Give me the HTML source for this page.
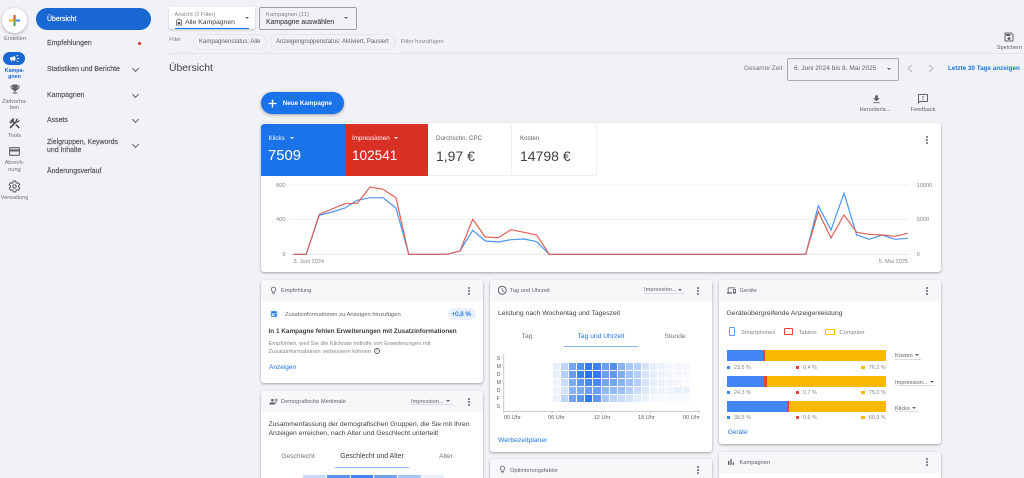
<!DOCTYPE html>
<html lang="de"><head><meta charset="utf-8"><title>Übersicht</title>
<style>
html,body{margin:0;padding:0;width:1024px;height:478px;overflow:hidden;background:#f1f2f5}
body{font-family:"Liberation Sans",sans-serif;color:#3c4043}
#w{position:relative;width:1024px;height:478px;overflow:hidden;filter:blur(.35px)}
.t{position:absolute;white-space:nowrap;line-height:10px;height:10px;font-size:6px;color:#5f6368;margin-top:1px}
.c{transform:translateX(-50%);text-align:center}
.r{transform:translateX(-100%)}
.b{position:absolute}
.card{position:absolute;background:#fff;border-radius:3px;box-shadow:0 1px 2px rgba(60,64,67,.35),0 1px 3px rgba(60,64,67,.12);overflow:hidden}
.hd{position:absolute;left:0;right:0;top:0;background:#f6f7f8}
svg.i{position:absolute;fill:#5f6368}
.nav{font-size:6.95px;color:#4d5156;-webkit-text-stroke:.15px #4d5156}
.rail{font-size:5.6px;color:#6b6f74}
.caret{position:absolute;width:0;height:0;border-left:2.5px solid transparent;border-right:2.5px solid transparent;border-top:2.5px solid #5f6368}
.dots{position:absolute;width:2px;height:2px;border-radius:50%;background:#5f6368;box-shadow:0 -3px 0 #5f6368,0 3px 0 #5f6368}
.chev{position:absolute;width:4px;height:4px;border-right:1.1px solid #5f6368;border-bottom:1.1px solid #5f6368;transform:rotate(45deg)}
.ttl{font-size:5.7px;color:#5f6368}
.h{font-size:6.8px;color:#3c4043}
.link{font-size:6.5px;color:#1a73e8}
.s{font-size:5.75px;color:#80868b}
.ax{font-size:5.6px;color:#80868b}
.hl{font-size:5.6px;color:#5f6368}
.pc{font-size:5.4px;color:#80868b}
.tab{font-size:6.7px;color:#70757a}
.heat{position:absolute;left:553px;top:362.5px;display:grid;grid-template-columns:repeat(17,7.1px);grid-auto-rows:7.1px;gap:1px}
.heat i{display:block;background:#2674f0}
</style></head><body><div id="w">

<!-- left rail -->
<div class="b" style="left:2px;top:8px;width:25px;height:25px;border-radius:50%;background:#fff;box-shadow:0 1px 3px rgba(60,64,67,.4)"></div>
<svg class="b" style="left:8px;top:14px" width="13" height="13" viewBox="0 0 13 13"><rect x="5.5" y="1" width="2" height="5" fill="#ea4335"/><rect x="5.5" y="7" width="2" height="5" fill="#34a853"/><rect x="1" y="5.5" width="5" height="2" fill="#fbbc04"/><rect x="7" y="5.5" width="5" height="2" fill="#4285f4"/><rect x="5.5" y="5.5" width="2" height="2" fill="#c7a53a"/></svg>
<div class="t c rail" style="left:15px;top:33px">Erstellen</div>
<div class="b" style="left:3px;top:52px;width:22px;height:13px;border-radius:7px;background:#1967d2"></div>
<svg class="i" style="left:9px;top:53px;fill:#fff" width="11" height="11" viewBox="0 0 24 24"><path d="M18 11v2h4v-2h-4zm-2 6.61c.96.71 2.21 1.65 3.2 2.39.4-.53.8-1.07 1.2-1.6-.99-.74-2.24-1.68-3.2-2.4-.4.54-.8 1.08-1.2 1.61zM20.4 5.6c-.4-.53-.8-1.07-1.2-1.6-.99.74-2.24 1.68-3.2 2.4.4.53.8 1.07 1.2 1.6.96-.72 2.21-1.65 3.2-2.4zM4 9c-1.1 0-2 .9-2 2v2c0 1.1.9 2 2 2h1v4h2v-4h1l5 3V6L8 9H4zm11.5 3c0-1.33-.58-2.53-1.5-3.35v6.69c.92-.81 1.5-2.01 1.5-3.34z"/></svg>
<div class="t c rail" style="left:14.5px;top:64.5px;color:#1967d2;font-weight:bold;font-size:5.3px">Kampa-</div>
<div class="t c rail" style="left:14.5px;top:71px;color:#1967d2;font-weight:bold;font-size:5.3px">gnen</div>
<svg class="i" style="left:8.5px;top:83px" width="12" height="12" viewBox="0 0 24 24"><path d="M19 5h-2V3H7v2H5c-1.1 0-2 .9-2 2v1c0 2.55 1.92 4.63 4.39 4.94.63 1.5 1.98 2.63 3.61 2.96V19H7v2h10v-2h-4v-3.1c1.63-.33 2.98-1.46 3.61-2.96C19.08 12.63 21 10.55 21 8V7c0-1.1-.9-2-2-2zM5 8V7h2v3.82C5.84 10.4 5 9.3 5 8zm14 0c0 1.3-.84 2.4-2 2.82V7h2v1z"/></svg>
<div class="t c rail" style="left:14.5px;top:95.5px">Zielvorha-</div>
<div class="t c rail" style="left:14.5px;top:102px">ben</div>
<svg class="i" style="left:8px;top:116.5px;fill:#4a4e52" width="13" height="13" viewBox="0 0 24 24"><path d="M13.78 15.3l6 6 2.11-2.16-6-6zM17.5 10c1.93 0 3.5-1.57 3.5-3.5 0-.58-.16-1.12-.41-1.6l-2.7 2.7-1.49-1.49 2.7-2.7c-.48-.25-1.02-.41-1.6-.41C15.57 3 14 4.57 14 6.5c0 .41.08.8.21 1.16l-1.85 1.85-1.78-1.78.71-.71-1.41-1.41L12 3.49c-1.17-1.17-3.07-1.17-4.24 0L4.22 7.03l1.41 1.41H2.81l-.71.71 3.54 3.54.71-.71V9.15l1.41 1.41.71-.71 1.78 1.78-7.41 7.41 2.12 2.12L16.34 9.79c.36.13.75.21 1.16.21z"/></svg>
<div class="t c rail" style="left:14.5px;top:129.5px">Tools</div>
<svg class="i" style="left:8px;top:144.5px" width="13" height="13" viewBox="0 0 24 24"><path d="M20 4H4c-1.11 0-1.99.89-1.99 2L2 18c0 1.11.89 2 2 2h16c1.11 0 2-.89 2-2V6c0-1.11-.89-2-2-2zm0 14H4v-6h16v6zm0-10H4V6h16v2z"/></svg>
<div class="t c rail" style="left:14.5px;top:157px">Abrech-</div>
<div class="t c rail" style="left:14.5px;top:164px">nung</div>
<svg class="b" style="left:8px;top:179.5px" width="13" height="13" viewBox="0 0 24 24" fill="none" stroke="#5f6368" stroke-width="2"><path d="M19.43 12.98c.04-.32.07-.64.07-.98 0-.34-.03-.66-.07-.98l2.11-1.65c.19-.15.24-.42.12-.64l-2-3.46c-.12-.22-.39-.3-.61-.22l-2.49 1c-.52-.4-1.08-.73-1.69-.98l-.38-2.65C14.46 2.18 14.25 2 14 2h-4c-.25 0-.46.18-.49.42l-.38 2.65c-.61.25-1.17.59-1.69.98l-2.49-1c-.23-.09-.49 0-.61.22l-2 3.46c-.13.22-.07.49.12.64l2.11 1.65c-.04.32-.07.65-.07.98 0 .33.03.66.07.98l-2.11 1.65c-.19.15-.24.42-.12.64l2 3.46c.12.22.39.3.61.22l2.49-1c.52.4 1.08.73 1.69.98l.38 2.65c.03.24.24.42.49.42h4c.25 0 .46-.18.49-.42l.38-2.65c.61-.25 1.17-.59 1.69-.98l2.49 1c.23.09.49 0 .61-.22l2-3.46c.12-.22.07-.49-.12-.64l-2.11-1.65z"/><circle cx="12" cy="12" r="3.2"/></svg>
<div class="t c rail" style="left:14.5px;top:192px">Verwaltung</div>

<!-- nav -->
<div class="b" style="left:36px;top:7.5px;width:115px;height:22px;border-radius:11px;background:#1967d2"></div>
<div class="t nav" style="left:47px;top:13.5px;color:#fff;-webkit-text-stroke:.15px #fff">Übersicht</div>
<div class="t nav" style="left:47px;top:38px">Empfehlungen</div>
<div class="b" style="left:138px;top:42px;width:3.4px;height:3.4px;border-radius:50%;background:#d93025"></div>
<div class="t nav" style="left:47px;top:64px">Statistiken und Berichte</div>
<div class="chev" style="left:133px;top:65.5px"></div>
<div class="t nav" style="left:47px;top:89.5px">Kampagnen</div>
<div class="chev" style="left:133px;top:91.5px"></div>
<div class="t nav" style="left:47px;top:115px">Assets</div>
<div class="chev" style="left:133px;top:116.5px"></div>
<div class="t nav" style="left:47px;top:136.5px">Zielgruppen, Keywords</div>
<div class="t nav" style="left:47px;top:145px">und Inhalte</div>
<div class="chev" style="left:133px;top:142px"></div>
<div class="t nav" style="left:47px;top:166px">Änderungsverlauf</div>

<!-- top bar -->
<div class="b" style="left:169px;top:7px;width:86px;height:22px;background:#fff;border-radius:2px;box-shadow:0 1px 2px rgba(60,64,67,.25);overflow:hidden"><div class="b" style="left:6px;right:6px;bottom:0;height:1.5px;background:#1a73e8"></div></div>
<div class="t" style="left:174.5px;top:8.5px;font-size:5.6px;color:#80868b">Ansicht (2 Filter)</div>
<svg class="i" style="left:175px;top:17.5px;fill:#4a4e52" width="8" height="8" viewBox="0 0 24 24"><path d="M12 2L3 8v14h18V8l-9-6zm7 18H5V9.1l7-4.7 7 4.7V20zM8 12h8v6H8z"/></svg>
<div class="t" style="left:185px;top:17px;font-size:6.8px;color:#3c4043">Alle Kampagnen</div>
<div class="caret" style="left:245px;top:17px"></div>
<div class="b" style="left:259px;top:7px;width:96px;height:21px;border:1px solid #9aa0a6;border-radius:2px"></div>
<div class="t" style="left:266px;top:9px;font-size:5.8px;color:#80868b">Kampagnen (11)</div>
<div class="t" style="left:266px;top:17px;font-size:6.9px;color:#3c4043;-webkit-text-stroke:.1px #3c4043">Kampagne auswählen</div>
<div class="caret" style="left:344px;top:17px"></div>

<div class="t" style="left:169px;top:34px;font-size:5.4px;color:#80868b">Filter</div>
<div class="b" style="left:193px;top:34px;width:72px;height:14px;border:1px solid #e4e5e8;border-radius:8px"></div>
<div class="t" style="left:199px;top:35.5px;font-size:6px;color:#5f6368">Kampagnenstatus: Alle</div>
<div class="b" style="left:270px;top:34px;width:124px;height:14px;border:1px solid #e4e5e8;border-radius:8px"></div>
<div class="t" style="left:276px;top:35.5px;font-size:6px;color:#5f6368">Anzeigengruppenstatus: Aktiviert, Pausiert</div>
<div class="t" style="left:400.7px;top:35.5px;font-size:5.8px;color:#80868b">Filter hinzufügen</div>
<div class="b" style="left:169px;top:53px;width:855px;height:1px;background:#e3e4e7"></div>
<div class="t" style="left:169px;top:63px;font-size:10.4px;color:#3c4043">Übersicht</div>

<svg class="i" style="left:1003px;top:30.5px" width="12" height="12" viewBox="0 0 24 24"><path d="M17 3H5c-1.11 0-2 .9-2 2v14c0 1.1.89 2 2 2h14c1.1 0 2-.9 2-2V7l-4-4zm2 16H5V5h11.17L19 7.83V19zm-7-7c-1.66 0-3 1.34-3 3s1.34 3 3 3 3-1.34 3-3-1.34-3-3-3zM6 6h9v4H6z"/></svg>
<div class="t c" style="left:1009.5px;top:41.5px;font-size:5.6px;color:#5f6368">Speichern</div>
<div class="t" style="left:744px;top:63px;font-size:6.4px;color:#70757a">Gesamte Zeit</div>
<div class="b" style="left:787px;top:58px;width:110px;height:20.5px;border:1px solid #a9acb1;border-radius:2px"></div>
<div class="t" style="left:794px;top:63px;font-size:6.6px;color:#5f6368">6. Juni 2024 bis 8. Mai 2025</div>
<div class="caret" style="left:886.5px;top:67.5px"></div>
<svg class="b" style="left:906px;top:64px" width="30" height="9" viewBox="0 0 30 9" fill="none" stroke="#b0b3b8" stroke-width=".9"><path d="M6 1L2 4.5 6 8"/><path d="M23 1l4 3.5L23 8"/></svg>
<div class="t" style="left:948px;top:63px;font-size:6.2px;color:#1a73e8;font-weight:bold;letter-spacing:.01em">Letzte 30 Tage anzeigen</div>

<div class="b" style="left:261px;top:92px;width:82.5px;height:22px;border-radius:11px;background:#1a73e8;box-shadow:0 1px 3px rgba(60,64,67,.45)"></div>
<svg class="b" style="left:267.5px;top:98.5px" width="9" height="9" viewBox="0 0 8 8"><path d="M3.4.5h1.2v2.9h2.9v1.2H4.6v2.9H3.4V4.6H.5V3.4h2.9z" fill="#fff"/></svg>
<div class="t" style="left:282.7px;top:97.5px;font-size:6.3px;color:#fff;font-weight:bold">Neue Kampagne</div>
<svg class="i" style="left:871px;top:93.5px" width="11" height="11" viewBox="0 0 24 24"><path d="M19 9h-4V3H9v6H5l7 7 7-7zM5 18v2h14v-2H5z"/></svg>
<div class="t c" style="left:875px;top:103.5px;font-size:5.6px;color:#5f6368">Herunterla...</div>
<svg class="i" style="left:917px;top:92.5px" width="12" height="12" viewBox="0 0 24 24"><path d="M20 2H4c-1.1 0-2 .9-2 2v18l4-4h14c1.1 0 2-.9 2-2V4c0-1.1-.9-2-2-2zm0 14H5.17L4 17.17V4h16v12zM11 12h2v2h-2zm0-6h2v4h-2z"/></svg>
<div class="t c" style="left:923px;top:103.5px;font-size:5.7px;color:#5f6368">Feedback</div>

<!-- main chart card -->
<div class="card" style="left:261px;top:123px;width:680px;height:149px"></div>
<div class="b" style="left:261px;top:123.5px;width:84px;height:52px;background:#1a73e8;border-radius:3px 0 0 0"></div>
<div class="b" style="left:345px;top:123.5px;width:83px;height:52px;background:#d93025"></div>
<div class="b" style="left:511px;top:123.5px;width:1px;height:52px;background:#f0f0f2"></div>
<div class="b" style="left:595.5px;top:123.5px;width:1px;height:52px;background:#f0f0f2"></div>
<div class="b" style="left:428px;top:175px;width:168px;height:1px;background:#f0f0f2"></div>
<div class="t" style="left:268.5px;top:132.5px;font-size:6.2px;color:#fff">Klicks</div>
<div class="caret" style="left:289.5px;top:137px;border-top-color:#fff"></div>
<div class="t" style="left:268px;top:149.5px;font-size:14.8px;color:#fff">7509</div>
<div class="t" style="left:352px;top:132.5px;font-size:6.3px;color:#fff">Impressionen</div>
<div class="caret" style="left:394px;top:137px;border-top-color:#fff"></div>
<div class="t" style="left:352px;top:149.5px;font-size:13.6px;color:#fff">102541</div>
<div class="t" style="left:436px;top:132.5px;font-size:6.2px;color:#5f6368">Durchschn. CPC</div>
<div class="t" style="left:436px;top:149.5px;font-size:14px;color:#3c4043">1,97 €</div>
<div class="t" style="left:520px;top:132.5px;font-size:6.2px;color:#5f6368">Kosten</div>
<div class="t" style="left:520px;top:149.5px;font-size:14px;color:#3c4043">14798 €</div>
<div class="dots" style="left:925.5px;top:139px"></div>

<svg class="b" style="left:0;top:0" width="1024" height="478" fill="none">
<path d="M290 185h619M290 219.3h619" stroke="#ececee" stroke-width=".8"/>
<path d="M290 254.3h619" stroke="#dfe0e2" stroke-width=".8"/>
<polyline stroke="#4f94f7" stroke-width="1.2" points="293.3,254.3 306.2,254.3 319.3,215.3 332,212 345,208 357.3,200.3 370,197.7 383,197.7 396,208 408.7,254.3 447.3,254.3 460,251 472.7,230.3 485.3,241 498.3,242 511,239.7 524,239 536.7,241.7 549.3,254.3 805.7,254.3 818.3,205.7 831,230 844,193.3 856.7,235 869.3,239.3 882,235 895,239.3 907.7,238.3"/>
<polyline stroke="#dc6259" stroke-width="1.2" points="293.3,254.3 306.2,254.3 319.3,214.3 332,209 345,203.7 357.3,203.3 370,187 383,189.3 396,197.7 408.7,254.3 447.3,254.3 460,251 472.7,219.3 485.3,237 498.3,237.7 511,229.7 524,232.3 536.7,235 549.3,254.3 805.7,254.3 818.3,211.7 831,238 844,215 856.7,232.3 869.3,234.3 882,235 895,236.3 907.7,233.3"/>
</svg>
<div class="t r ax" style="left:285.5px;top:179.5px">800</div>
<div class="t r ax" style="left:285.5px;top:214px">400</div>
<div class="t r ax" style="left:285.5px;top:248.5px">0</div>
<div class="t ax" style="left:916.7px;top:179.5px">10000</div>
<div class="t ax" style="left:916.7px;top:214px">5000</div>
<div class="t ax" style="left:916.7px;top:248.5px">0</div>
<div class="t ax" style="left:293.5px;top:256px">3. Juni 2024</div>
<div class="t r ax" style="left:908px;top:256px">5. Mai 2025</div>

<!-- Empfehlung card -->
<div class="card" style="left:261px;top:279.5px;width:222px;height:103.5px"><div class="hd" style="height:21.5px"></div></div>
<svg class="i" style="left:268.5px;top:285.5px" width="9" height="9" viewBox="0 0 24 24"><path d="M9 21c0 .55.45 1 1 1h4c.55 0 1-.45 1-1v-1H9v1zm3-19C8.14 2 5 5.14 5 9c0 2.38 1.19 4.47 3 5.74V17c0 .55.45 1 1 1h6c.55 0 1-.45 1-1v-2.26c1.81-1.27 3-3.36 3-5.74 0-3.86-3.14-7-7-7zm2.85 11.1l-.85.6V16h-4v-2.3l-.85-.6C7.8 12.16 7 10.63 7 9c0-2.76 2.24-5 5-5s5 2.24 5 5c0 1.63-.8 3.16-2.15 4.1z"/></svg>
<div class="t ttl" style="left:281px;top:285px">Empfehlung</div>
<div class="dots" style="left:467.5px;top:289.5px"></div>
<div class="b" style="left:268.5px;top:309px;width:10px;height:10px;border-radius:50%;background:#e8f0fe"></div>
<svg class="b" style="left:270.5px;top:311px" width="6" height="6" viewBox="0 0 6 6"><rect x=".3" y=".3" width="5.4" height="5.4" rx=".5" fill="#1a73e8"/><rect x="1" y="2" width="4" height=".6" fill="#fff"/><rect x="1" y="3.3" width="2.5" height="1.5" fill="#fff"/></svg>
<div class="t" style="left:285px;top:308.5px;font-size:5.8px;color:#5f6368">Zusatzinformationen zu Anzeigen hinzufügen</div>
<div class="b" style="left:448px;top:308px;width:28px;height:12px;border-radius:6px;background:#e8f0fe"></div>
<div class="t" style="left:451.5px;top:308.5px;font-size:6.2px;color:#1a73e8;-webkit-text-stroke:.15px #1a73e8">+0,8 %</div>
<div class="t" style="left:268.5px;top:325.5px;font-size:6.4px;color:#3c4043;font-weight:bold">In 1 Kampagne fehlen Erweiterungen mit Zusatzinformationen</div>
<div class="t s" style="left:268.5px;top:337.5px">Empfohlen, weil Sie die Klickrate mithilfe von Erweiterungen mit</div>
<div class="t s" style="left:268.5px;top:345.5px">Zusatzinformationen verbessern können</div>
<div class="b" style="left:373.7px;top:347.7px;width:4.6px;height:4.6px;border:.7px solid #5f6368;border-radius:50%"></div>
<div class="t c" style="left:376.7px;top:344.9px;font-size:4px;color:#5f6368">?</div>
<div class="t link" style="left:269px;top:361.8px">Anzeigen</div>

<!-- Demografie card -->
<div class="card" style="left:261px;top:391px;width:222px;height:87px;border-radius:3px 3px 0 0"><div class="hd" style="height:21px"></div></div>
<svg class="i" style="left:268.5px;top:396.5px" width="9" height="9" viewBox="0 0 24 24"><path d="M9 12a3.5 3.5 0 1 0 0-7 3.5 3.5 0 0 0 0 7zm0 2c-2.7 0-8 1.3-8 4v2h16v-2c0-2.7-5.3-4-8-4zM15 5h8v2h-8zm0 4h8v2h-8zm0 4h6v2h-6z"/></svg>
<div class="t ttl" style="left:281px;top:396px">Demografische Merkmale</div>
<div class="t ttl" style="left:411px;top:395.5px">Impression...</div>
<div class="caret" style="left:445.5px;top:399.5px"></div>
<div class="b" style="left:411px;top:404px;width:41px;height:.7px;background:#dadce0"></div>
<div class="dots" style="left:467.5px;top:400.5px"></div>
<div class="t h" style="left:268.5px;top:418.5px">Zusammenfassung der demografischen Gruppen, die Sie mit Ihren</div>
<div class="t h" style="left:268.5px;top:428px">Anzeigen erreichen, nach Alter und Geschlecht unterteilt</div>
<div class="t c tab" style="left:298px;top:450.5px">Geschlecht</div>
<div class="t c tab" style="left:372px;top:450.5px;color:#3c4043;font-size:6.9px">Geschlecht und Alter</div>
<div class="t c tab" style="left:446px;top:450.5px">Alter</div>
<div class="b" style="left:335px;top:466.5px;width:74px;height:1px;background:#8ab4f8"></div>
<div class="b" style="left:302.5px;top:475px;width:23.2px;height:3px;background:#c6dafc"></div>
<div class="b" style="left:327px;top:475px;width:22.7px;height:3px;background:#5a95f5"></div>
<div class="b" style="left:350.7px;top:475px;width:22.3px;height:3px;background:#4285f4"></div>
<div class="b" style="left:374px;top:475px;width:22.7px;height:3px;background:#6ea3f6"></div>
<div class="b" style="left:397.7px;top:475px;width:23px;height:3px;background:#a6c6fa"></div>
<div class="b" style="left:421.7px;top:475px;width:22.3px;height:3px;background:#e8f0fe"></div>

<!-- Tag und Uhrzeit card -->
<div class="card" style="left:490px;top:279.5px;width:222px;height:172px"><div class="hd" style="height:21.5px"></div></div>
<svg class="i" style="left:496.5px;top:285px;fill:#4a4e52" width="10.5" height="10.5" viewBox="0 0 24 24"><path d="M11.99 2C6.47 2 2 6.48 2 12s4.47 10 9.99 10C17.52 22 22 17.52 22 12S17.52 2 11.99 2zM12 20c-4.42 0-8-3.58-8-8s3.58-8 8-8 8 3.58 8 8-3.58 8-8 8zm.5-13H11v6l5.25 3.15.75-1.23-4.5-2.67z"/></svg>
<div class="t ttl" style="left:510px;top:285px">Tag und Uhrzeit</div>
<div class="t ttl" style="left:644px;top:284px">Impression...</div>
<div class="caret" style="left:678px;top:288.5px"></div>
<div class="b" style="left:644px;top:293px;width:40px;height:.7px;background:#dadce0"></div>
<div class="dots" style="left:696.5px;top:289.5px"></div>
<div class="t h" style="left:498px;top:307.5px">Leistung nach Wochentag und Tageszeit</div>
<div class="t c tab" style="left:527px;top:330.5px">Tag</div>
<div class="t c tab" style="left:601px;top:330.5px;color:#1a73e8">Tag und Uhrzeit</div>
<div class="t c tab" style="left:675px;top:330.5px">Stunde</div>
<div class="b" style="left:564px;top:346px;width:74px;height:1px;background:#8ab4f8"></div>
<div class="t hl" style="left:496.5px;top:352.5px">S</div>
<div class="t hl" style="left:496.5px;top:360.5px">M</div>
<div class="t hl" style="left:496.5px;top:368.5px">D</div>
<div class="t hl" style="left:496.5px;top:376.5px">M</div>
<div class="t hl" style="left:496.5px;top:384.5px">D</div>
<div class="t hl" style="left:496.5px;top:392.5px">F</div>
<div class="t hl" style="left:496.5px;top:400.5px">S</div>
<svg class="b" style="left:0;top:0" width="1024" height="478" fill="none" stroke="#bdc1c6" stroke-width=".9"><path d="M503.7 354v57.3h196M503.7 411v2M552 411v2M601.3 411v2M650.7 411v2M699.7 411v2"/></svg>
<div class="heat">
<i style="opacity:.12"></i><i style="opacity:.3"></i><i style="opacity:.65"></i><i style="opacity:.8"></i><i style="opacity:.95"></i><i style="opacity:.9"></i><i style="opacity:.7"></i><i style="opacity:.8"></i><i style="opacity:.55"></i><i style="opacity:.4"></i><i style="opacity:.35"></i><i style="opacity:.2"></i><i style="opacity:.12"></i><i style="opacity:.1"></i><i style="opacity:.05"></i><i style="opacity:.05"></i><i style="opacity:.05"></i>
<i style="opacity:.12"></i><i style="opacity:.35"></i><i style="opacity:.7"></i><i style="opacity:.9"></i><i style="opacity:1"></i><i style="opacity:.95"></i><i style="opacity:.7"></i><i style="opacity:.75"></i><i style="opacity:.6"></i><i style="opacity:.45"></i><i style="opacity:.35"></i><i style="opacity:.2"></i><i style="opacity:.12"></i><i style="opacity:.1"></i><i style="opacity:.06"></i><i style="opacity:.05"></i><i style="opacity:.05"></i>
<i style="opacity:.08"></i><i style="opacity:.25"></i><i style="opacity:.6"></i><i style="opacity:.75"></i><i style="opacity:.85"></i><i style="opacity:.85"></i><i style="opacity:.65"></i><i style="opacity:.65"></i><i style="opacity:.55"></i><i style="opacity:.45"></i><i style="opacity:.35"></i><i style="opacity:.2"></i><i style="opacity:.12"></i><i style="opacity:.1"></i><i style="opacity:.08"></i><i style="opacity:.05"></i><i style="opacity:.03"></i>
<i style="opacity:.08"></i><i style="opacity:.2"></i><i style="opacity:.55"></i><i style="opacity:.6"></i><i style="opacity:.7"></i><i style="opacity:.7"></i><i style="opacity:.5"></i><i style="opacity:.5"></i><i style="opacity:.45"></i><i style="opacity:.35"></i><i style="opacity:.25"></i><i style="opacity:.15"></i><i style="opacity:.1"></i><i style="opacity:.08"></i><i style="opacity:.08"></i><i style="opacity:.1"></i><i style="opacity:.1"></i>
<i style="opacity:.1"></i><i style="opacity:.3"></i><i style="opacity:.65"></i><i style="opacity:.75"></i><i style="opacity:.95"></i><i style="opacity:.75"></i><i style="opacity:.4"></i><i style="opacity:.3"></i><i style="opacity:.25"></i><i style="opacity:.2"></i><i style="opacity:.12"></i><i style="opacity:.1"></i><i style="opacity:.06"></i><i style="opacity:.04"></i><i style="opacity:.04"></i><i style="opacity:.04"></i><i style="opacity:.04"></i>
</div>
<div class="t hl" style="left:504px;top:411.5px">00 Uhr</div>
<div class="t hl" style="left:548px;top:411.5px">06 Uhr</div>
<div class="t hl" style="left:593.7px;top:411.5px">12 Uhr</div>
<div class="t hl" style="left:638px;top:411.5px">18 Uhr</div>
<div class="t hl" style="left:683px;top:411.5px">00 Uhr</div>
<div class="t link" style="left:498px;top:435px;font-size:6.8px">Werbezeitplaner</div>

<!-- Optimierungsfaktor -->
<div class="card" style="left:490px;top:459px;width:222px;height:19px;border-radius:3px 3px 0 0"><div class="hd" style="height:19px"></div></div>
<svg class="i" style="left:497.5px;top:464.5px" width="9" height="9" viewBox="0 0 24 24"><path d="M9 21c0 .55.45 1 1 1h4c.55 0 1-.45 1-1v-1H9v1zm3-19C8.14 2 5 5.14 5 9c0 2.38 1.19 4.47 3 5.74V17c0 .55.45 1 1 1h6c.55 0 1-.45 1-1v-2.26c1.81-1.27 3-3.36 3-5.74 0-3.86-3.14-7-7-7zm2.85 11.1l-.85.6V16h-4v-2.3l-.85-.6C7.8 12.16 7 10.63 7 9c0-2.76 2.24-5 5-5s5 2.24 5 5c0 1.63-.8 3.16-2.15 4.1z"/></svg>
<div class="t ttl" style="left:510px;top:465px">Optimierungsfaktor</div>
<div class="dots" style="left:696.5px;top:469px"></div>

<!-- Geräte -->
<div class="card" style="left:719px;top:279.5px;width:222px;height:164.5px"><div class="hd" style="height:21.5px"></div></div>
<svg class="i" style="left:726.5px;top:285.5px;fill:#4a4e52" width="9" height="9" viewBox="0 0 24 24"><path d="M4 6h18V4H4c-1.1 0-2 .9-2 2v11H0v3h14v-3H4V6zm19 2h-6c-.55 0-1 .45-1 1v10c0 .55.45 1 1 1h6c.55 0 1-.45 1-1V9c0-.55-.45-1-1-1zm-1 9h-4v-7h4v7z"/></svg>
<div class="t ttl" style="left:739.5px;top:285px">Geräte</div>
<div class="dots" style="left:925.5px;top:289.5px"></div>
<div class="t h" style="left:726.5px;top:307.5px">Geräteübergreifende Anzeigenleistung</div>
<div class="b" style="left:729px;top:326.7px;width:3.7px;height:7.6px;border:1.5px solid #5f9bf6;border-radius:1px"></div>
<div class="t s" style="left:741px;top:326.5px">Smartphones</div>
<div class="b" style="left:784.3px;top:328.3px;width:7px;height:5px;border:1.5px solid #ea4335;border-radius:1px"></div>
<div class="t s" style="left:798.5px;top:326.5px">Tablets</div>
<div class="b" style="left:825.3px;top:329px;width:7.6px;height:4.4px;border:1.4px solid #fbbc04;border-radius:1px"></div>
<div class="t s" style="left:839.5px;top:326.5px">Computer</div>

<div class="b" style="left:727px;top:350px;width:36.3px;height:11px;background:#4285f4"></div><div class="b" style="left:763.3px;top:350px;width:1.7px;height:11px;background:#ea4335"></div><div class="b" style="left:765px;top:350px;width:120.7px;height:11px;background:#f9b900"></div>
<div class="b" style="left:727px;top:376px;width:37.3px;height:10.7px;background:#4285f4"></div><div class="b" style="left:764.3px;top:376px;width:2.4px;height:10.7px;background:#ea4335"></div><div class="b" style="left:766.7px;top:376px;width:119px;height:10.7px;background:#f9b900"></div>
<div class="b" style="left:727px;top:401.3px;width:60.3px;height:11px;background:#4285f4"></div><div class="b" style="left:787.3px;top:401.3px;width:1.7px;height:11px;background:#ea4335"></div><div class="b" style="left:789px;top:401.3px;width:96.7px;height:11px;background:#f9b900"></div>

<div class="b" style="left:727px;top:365.5px;width:3px;height:3px;background:#4285f4"></div><div class="t pc" style="left:734px;top:361.5px">23,5 %</div>
<div class="b" style="left:796px;top:365.5px;width:3px;height:3px;background:#ea4335"></div><div class="t pc" style="left:803px;top:361.5px">0,4 %</div>
<div class="b" style="left:861px;top:365.5px;width:3.5px;height:3px;background:#f9b900"></div><div class="t pc r" style="left:885.7px;top:361.5px">76,2 %</div>
<div class="b" style="left:727px;top:390.5px;width:3px;height:3px;background:#4285f4"></div><div class="t pc" style="left:734px;top:386.5px">24,3 %</div>
<div class="b" style="left:796px;top:390.5px;width:3px;height:3px;background:#ea4335"></div><div class="t pc" style="left:803px;top:386.5px">0,7 %</div>
<div class="b" style="left:861px;top:390.5px;width:3.5px;height:3px;background:#f9b900"></div><div class="t pc r" style="left:885.7px;top:386.5px">75,0 %</div>
<div class="b" style="left:727px;top:416px;width:3px;height:3px;background:#4285f4"></div><div class="t pc" style="left:734px;top:411.8px">38,5 %</div>
<div class="b" style="left:796px;top:416px;width:3px;height:3px;background:#ea4335"></div><div class="t pc" style="left:803px;top:411.8px">0,6 %</div>
<div class="b" style="left:861px;top:416px;width:3.5px;height:3px;background:#f9b900"></div><div class="t pc r" style="left:885.7px;top:411.8px">60,9 %</div>

<div class="t ttl" style="left:895px;top:349.5px">Kosten</div>
<div class="caret" style="left:915px;top:354px"></div>
<div class="b" style="left:895px;top:358.5px;width:26px;height:.7px;background:#dadce0"></div>
<div class="t ttl" style="left:895px;top:376.5px">Impression...</div>
<div class="caret" style="left:929.5px;top:380.5px"></div>
<div class="b" style="left:895px;top:385px;width:40px;height:.7px;background:#dadce0"></div>
<div class="t ttl" style="left:895px;top:402.5px">Klicks</div>
<div class="caret" style="left:912px;top:407px"></div>
<div class="b" style="left:895px;top:411px;width:23px;height:.7px;background:#dadce0"></div>
<div class="t link" style="left:727.7px;top:426.5px">Geräte</div>

<!-- Kampagnen card -->
<div class="card" style="left:719px;top:451.7px;width:222px;height:26.3px;border-radius:3px 3px 0 0"><div class="hd" style="height:21px"></div></div>
<svg class="i" style="left:726px;top:457px;fill:#4a4e52" width="10" height="10" viewBox="0 0 24 24"><path d="M5 9.2h3V19H5zM10.6 5h2.8v14h-2.8zm5.600 8H19v6h-2.800z"/></svg>
<div class="t ttl" style="left:739.5px;top:457px">Kampagnen</div>
<div class="dots" style="left:925.5px;top:461px"></div>
</div></body></html>
